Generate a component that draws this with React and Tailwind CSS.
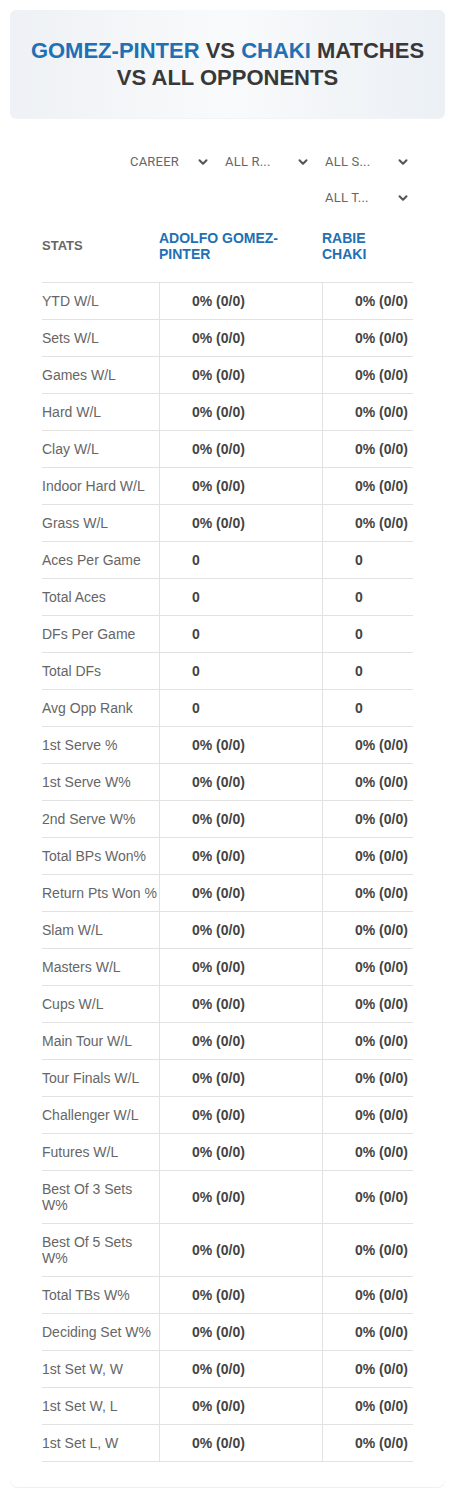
import { ChevronDown } from "lucide-react";

const rows = [
  ["YTD W/L", "0% (0/0)"],
  ["Sets W/L", "0% (0/0)"],
  ["Games W/L", "0% (0/0)"],
  ["Hard W/L", "0% (0/0)"],
  ["Clay W/L", "0% (0/0)"],
  ["Indoor Hard W/L", "0% (0/0)"],
  ["Grass W/L", "0% (0/0)"],
  ["Aces Per Game", "0"],
  ["Total Aces", "0"],
  ["DFs Per Game", "0"],
  ["Total DFs", "0"],
  ["Avg Opp Rank", "0"],
  ["1st Serve %", "0% (0/0)"],
  ["1st Serve W%", "0% (0/0)"],
  ["2nd Serve W%", "0% (0/0)"],
  ["Total BPs Won%", "0% (0/0)"],
  ["Return Pts Won %", "0% (0/0)"],
  ["Slam W/L", "0% (0/0)"],
  ["Masters W/L", "0% (0/0)"],
  ["Cups W/L", "0% (0/0)"],
  ["Main Tour W/L", "0% (0/0)"],
  ["Tour Finals W/L", "0% (0/0)"],
  ["Challenger W/L", "0% (0/0)"],
  ["Futures W/L", "0% (0/0)"],
  ["Best Of 3 Sets W%", "0% (0/0)"],
  ["Best Of 5 Sets W%", "0% (0/0)"],
  ["Total TBs W%", "0% (0/0)"],
  ["Deciding Set W%", "0% (0/0)"],
  ["1st Set W, W", "0% (0/0)"],
  ["1st Set W, L", "0% (0/0)"],
  ["1st Set L, W", "0% (0/0)"],
];

const filters = [
  { label: "CAREER", w: "w-[88px]" },
  { label: "ALL R...", w: "w-[93px]" },
  { label: "ALL S...", w: "w-[93px]" },
  { label: "ALL T...", w: "w-[93px]" },
];

function Filter({ label, w }) {
  return (
    <div className={w + " h-[30px] flex items-center justify-between pl-[5px] pr-[3px] text-[13px] text-[#666] font-['Roboto',sans-serif]"}>
      <span className="tracking-[0.2px]">{label}</span>
      <ChevronDown size={14} strokeWidth={3.5} className="text-[#555]" />
    </div>
  );
}

export default function App() {
  return (
    <div className="bg-white p-[10px] font-['Liberation_Sans',Arial,sans-serif]">

      {/* title card */}
      <div className="h-[108px] rounded-md bg-gradient-to-r from-[#eef1f5] via-[#f9fafb] to-[#ebf0f5] shadow-[0_1px_1px_rgba(0,0,0,0.05)] flex items-center justify-center px-[18px]">
        <h1 className="text-center text-[22px] leading-[27px] font-bold text-[#383838] uppercase">
          <span className="text-[#2170b3]">Gomez-Pinter</span> vs{" "}
          <span className="text-[#2170b3]">Chaki</span> Matches vs All Opponents
        </h1>
      </div>

      <div className="mt-[10px] rounded-lg bg-white shadow-[0_1px_1px_rgba(0,0,0,0.07)] px-[32px] pt-[19px] pb-[25px]">

        <div className="flex flex-wrap justify-end gap-x-[7px] gap-y-[6px]">
          {filters.map(f => (
            <Filter key={f.label} label={f.label} w={f.w} />
          ))}
        </div>

        <div className="flex items-center pt-[17px] pb-[20px] text-[14px] leading-[16px] font-bold">
          <div className="w-[117px] text-[13px] text-[#666]">STATS</div>
          <div className="w-[163px] pr-[40px] text-[#2170b3]">ADOLFO GOMEZ-PINTER</div>
          <div className="flex-1 pr-[20px] text-[#2170b3]">RABIE CHAKI</div>
        </div>

        <div className="border-b border-[#e2e2e2]">
          {rows.map(([label, val]) => (
            <div key={label} className="flex border-t border-[#e2e2e2] text-[14px] leading-[16px]">
              <div className="w-[117px] py-[10px] text-[#666]">{label}</div>
              <div className="w-[163px] border-l border-[#e2e2e2] pl-[32px] flex items-center font-bold text-[#444]">
                {val}
              </div>
              <div className="flex-1 border-l border-[#e2e2e2] pl-[32px] flex items-center font-bold text-[#444]">
                {val}
              </div>
            </div>
          ))}
        </div>

      </div>
    </div>
  );
}
